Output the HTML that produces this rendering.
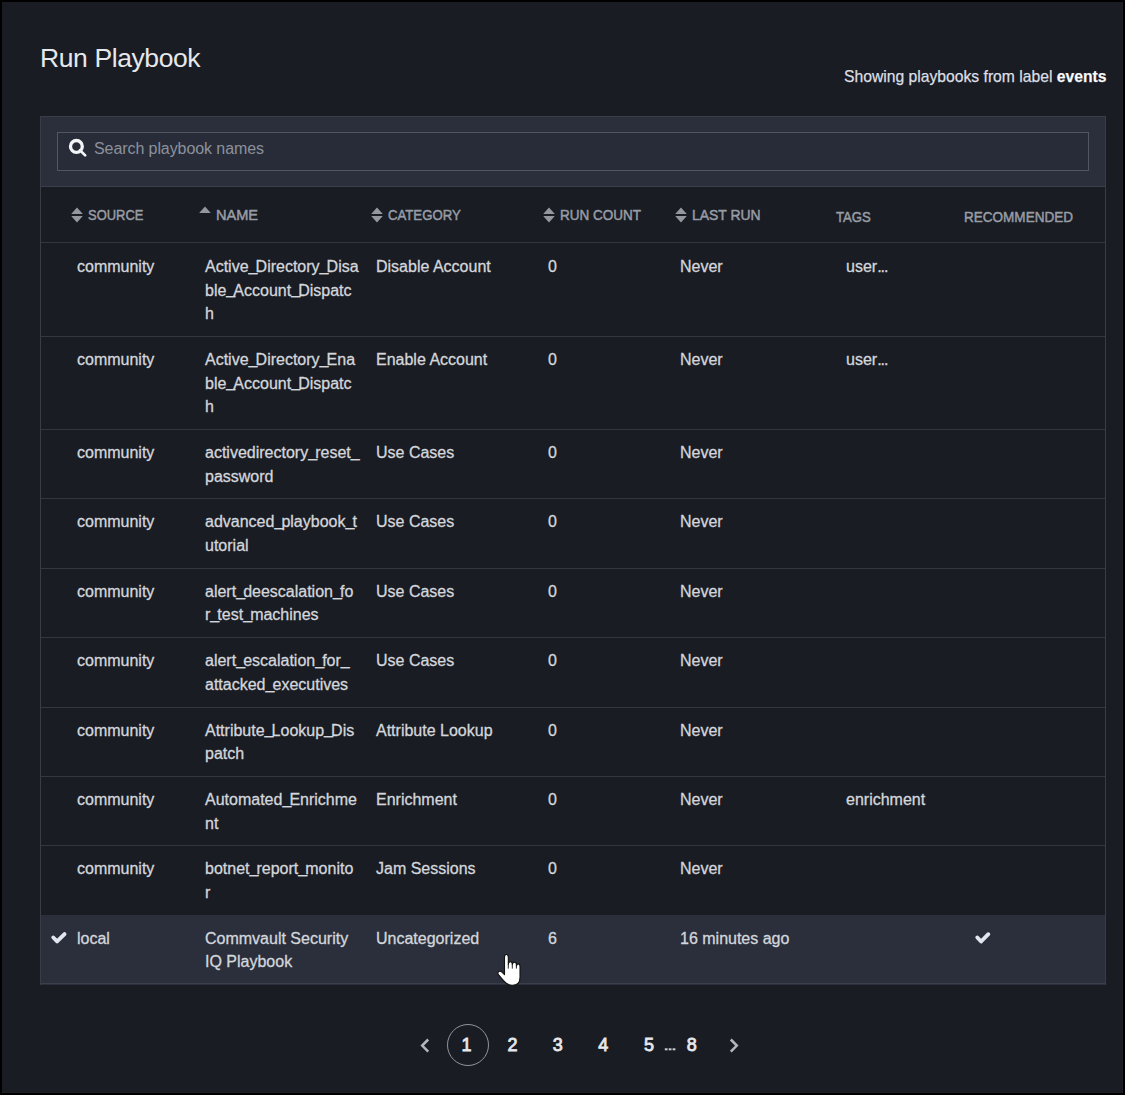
<!DOCTYPE html>
<html><head><meta charset="utf-8">
<style>
html,body{margin:0;padding:0;}
body{width:1125px;height:1095px;background:#000;position:relative;overflow:hidden;font-family:"Liberation Sans",sans-serif;color:#e6e8ec;}
.panel{position:absolute;left:2px;top:2px;width:1120px;height:1090px;background:#191c23;border-right:1px solid #1e2023;border-bottom:1px solid #1e2023;}
.abs{position:absolute;white-space:nowrap;}
.title{left:40px;top:42.6px;font-size:26.5px;letter-spacing:-0.4px;line-height:30px;color:#e6e8ec;}
.showing{left:844px;top:68px;font-size:15.7px;line-height:18px;color:#dcdfe4;-webkit-text-stroke:0.25px #dcdfe4;}
.showing b{color:#fff;}
.tblframe{position:absolute;left:40px;top:116px;width:1064px;height:867px;border:1px solid #393d46;background:#191c23;}
.searchbar{position:absolute;left:41px;top:117px;width:1064px;height:69px;background:#2a2f3b;border-bottom:1px solid #3a3f4b;}
.search{position:absolute;left:57px;top:132px;width:1030px;height:37px;border:1px solid #505664;background:#272c38;}
.ph{left:94px;top:140px;font-size:16px;letter-spacing:-0.08px;line-height:18px;color:#8c919c;}
.hline{position:absolute;left:41px;width:1064px;height:1px;background:#34383e;}
.hd{font-size:15px;line-height:16px;font-weight:normal;-webkit-text-stroke:0.5px #989ca5;color:#989ca5;transform-origin:0 0;}
.c{font-size:16px;line-height:23.625px;color:#d3d6db;-webkit-text-stroke:0.3px #d3d6db;}
.selrow{background:#2a2f3b;}
.pg{top:1034.5px;width:20px;text-align:center;font-size:18px;line-height:20px;font-weight:normal;color:#e6e8ec;-webkit-text-stroke:0.8px #e6e8ec;}
.dots{top:1036px;width:20px;text-align:center;font-size:13px;line-height:16px;font-weight:bold;color:#d6d9de;letter-spacing:-0.5px;}
.pgcircle{left:446.5px;top:1023.5px;width:42px;height:42px;box-sizing:border-box;border:1.3px solid #8f949c;border-radius:50%;}
.hline.last{background:#3a3f4b;}
.us{letter-spacing:-1.9px;position:relative;top:-1.2px;}
.ell{letter-spacing:-1px;}

</style></head>
<body>
<div class="panel"></div>
<div class="abs title">Run Playbook</div>
<div class="abs showing">Showing playbooks from label <b>events</b></div>
<div class="tblframe"></div>
<div class="searchbar"></div>
<div class="search"></div>
<svg class="abs" style="left:67px;top:138px" width="22" height="22" viewBox="0 0 22 22"><circle cx="9.4" cy="8.4" r="5.9" fill="none" stroke="#f2f4f7" stroke-width="3.3"/><line x1="13" y1="12.2" x2="18.2" y2="17.4" stroke="#f2f4f7" stroke-width="2.7" stroke-linecap="round"/></svg>
<div class="abs ph">Search playbook names</div>
<div class="hline" style="top:242px"></div>
<svg class="abs" style="left:71px;top:206.6px" width="12" height="16" viewBox="0 0 12 16"><path d="M6 0.6 L11.6 6.7 Q11.8 7 11.4 7 L0.6 7 Q0.2 7 0.4 6.7 Z M6 15.4 L11.6 9.3 Q11.8 9 11.4 9 L0.6 9 Q0.2 9 0.4 9.3 Z" fill="#93979f"/></svg>
<div class="abs hd" style="left:88.0px;top:207px;transform:scaleX(0.8625)">SOURCE</div>
<svg class="abs" style="left:199px;top:205.8px" width="12" height="8" viewBox="0 0 12 8"><path d="M6 0.6 L11.6 6.7 Q11.8 7 11.4 7 L0.6 7 Q0.2 7 0.4 6.7 Z" fill="#93979f"/></svg>
<div class="abs hd" style="left:216.0px;top:207px;transform:scaleX(0.971)">NAME</div>
<svg class="abs" style="left:371px;top:206.6px" width="12" height="16" viewBox="0 0 12 16"><path d="M6 0.6 L11.6 6.7 Q11.8 7 11.4 7 L0.6 7 Q0.2 7 0.4 6.7 Z M6 15.4 L11.6 9.3 Q11.8 9 11.4 9 L0.6 9 Q0.2 9 0.4 9.3 Z" fill="#93979f"/></svg>
<div class="abs hd" style="left:388.1px;top:207px;transform:scaleX(0.878)">CATEGORY</div>
<svg class="abs" style="left:543px;top:206.6px" width="12" height="16" viewBox="0 0 12 16"><path d="M6 0.6 L11.6 6.7 Q11.8 7 11.4 7 L0.6 7 Q0.2 7 0.4 6.7 Z M6 15.4 L11.6 9.3 Q11.8 9 11.4 9 L0.6 9 Q0.2 9 0.4 9.3 Z" fill="#93979f"/></svg>
<div class="abs hd" style="left:559.7px;top:207px;transform:scaleX(0.899)">RUN COUNT</div>
<svg class="abs" style="left:675px;top:206.6px" width="12" height="16" viewBox="0 0 12 16"><path d="M6 0.6 L11.6 6.7 Q11.8 7 11.4 7 L0.6 7 Q0.2 7 0.4 6.7 Z M6 15.4 L11.6 9.3 Q11.8 9 11.4 9 L0.6 9 Q0.2 9 0.4 9.3 Z" fill="#93979f"/></svg>
<div class="abs hd" style="left:691.9px;top:207px;transform:scaleX(0.928)">LAST RUN</div>
<div class="abs hd" style="left:836.4px;top:208.5px;transform:scaleX(0.875)">TAGS</div>
<div class="abs hd" style="left:964.3px;top:208.5px;transform:scaleX(0.902)">RECOMMENDED</div>
<div class="hline" style="top:336.000px"></div>
<div class="abs c" style="left:77px;top:255.062px">community</div>
<div class="abs c" style="left:205px;top:255.062px">Active<span class="us">_</span>Directory<span class="us">_</span>Disa<br>ble<span class="us">_</span>Account<span class="us">_</span>Dispatc<br>h</div>
<div class="abs c" style="left:376px;top:255.062px">Disable Account</div>
<div class="abs c" style="left:548px;top:255.062px">0</div>
<div class="abs c" style="left:680px;top:255.062px">Never</div>
<div class="abs c" style="left:846px;top:255.062px">user<span class="ell">...</span></div>
<div class="hline" style="top:429.000px"></div>
<div class="abs c" style="left:77px;top:348.062px">community</div>
<div class="abs c" style="left:205px;top:348.062px">Active<span class="us">_</span>Directory<span class="us">_</span>Ena<br>ble<span class="us">_</span>Account<span class="us">_</span>Dispatc<br>h</div>
<div class="abs c" style="left:376px;top:348.062px">Enable Account</div>
<div class="abs c" style="left:548px;top:348.062px">0</div>
<div class="abs c" style="left:680px;top:348.062px">Never</div>
<div class="abs c" style="left:846px;top:348.062px">user<span class="ell">...</span></div>
<div class="hline" style="top:498.375px"></div>
<div class="abs c" style="left:77px;top:441.062px">community</div>
<div class="abs c" style="left:205px;top:441.062px">activedirectory<span class="us">_</span>reset<span class="us">_</span><br>password</div>
<div class="abs c" style="left:376px;top:441.062px">Use Cases</div>
<div class="abs c" style="left:548px;top:441.062px">0</div>
<div class="abs c" style="left:680px;top:441.062px">Never</div>
<div class="hline" style="top:567.750px"></div>
<div class="abs c" style="left:77px;top:510.438px">community</div>
<div class="abs c" style="left:205px;top:510.438px">advanced<span class="us">_</span>playbook<span class="us">_</span>t<br>utorial</div>
<div class="abs c" style="left:376px;top:510.438px">Use Cases</div>
<div class="abs c" style="left:548px;top:510.438px">0</div>
<div class="abs c" style="left:680px;top:510.438px">Never</div>
<div class="hline" style="top:637.125px"></div>
<div class="abs c" style="left:77px;top:579.812px">community</div>
<div class="abs c" style="left:205px;top:579.812px">alert<span class="us">_</span>deescalation<span class="us">_</span>fo<br>r<span class="us">_</span>test<span class="us">_</span>machines</div>
<div class="abs c" style="left:376px;top:579.812px">Use Cases</div>
<div class="abs c" style="left:548px;top:579.812px">0</div>
<div class="abs c" style="left:680px;top:579.812px">Never</div>
<div class="hline" style="top:706.500px"></div>
<div class="abs c" style="left:77px;top:649.188px">community</div>
<div class="abs c" style="left:205px;top:649.188px">alert<span class="us">_</span>escalation<span class="us">_</span>for<span class="us">_</span><br>attacked<span class="us">_</span>executives</div>
<div class="abs c" style="left:376px;top:649.188px">Use Cases</div>
<div class="abs c" style="left:548px;top:649.188px">0</div>
<div class="abs c" style="left:680px;top:649.188px">Never</div>
<div class="hline" style="top:775.875px"></div>
<div class="abs c" style="left:77px;top:718.562px">community</div>
<div class="abs c" style="left:205px;top:718.562px">Attribute<span class="us">_</span>Lookup<span class="us">_</span>Dis<br>patch</div>
<div class="abs c" style="left:376px;top:718.562px">Attribute Lookup</div>
<div class="abs c" style="left:548px;top:718.562px">0</div>
<div class="abs c" style="left:680px;top:718.562px">Never</div>
<div class="hline" style="top:845.250px"></div>
<div class="abs c" style="left:77px;top:787.938px">community</div>
<div class="abs c" style="left:205px;top:787.938px">Automated<span class="us">_</span>Enrichme<br>nt</div>
<div class="abs c" style="left:376px;top:787.938px">Enrichment</div>
<div class="abs c" style="left:548px;top:787.938px">0</div>
<div class="abs c" style="left:680px;top:787.938px">Never</div>
<div class="abs c" style="left:846px;top:787.938px">enrichment</div>
<div class="hline" style="top:914.625px"></div>
<div class="abs c" style="left:77px;top:857.312px">community</div>
<div class="abs c" style="left:205px;top:857.312px">botnet<span class="us">_</span>report<span class="us">_</span>monito<br>r</div>
<div class="abs c" style="left:376px;top:857.312px">Jam Sessions</div>
<div class="abs c" style="left:548px;top:857.312px">0</div>
<div class="abs c" style="left:680px;top:857.312px">Never</div>
<div class="abs selrow" style="left:41px;top:915.125px;width:1064px;height:69.375px"></div>
<div class="hline last" style="top:983.000px"></div>
<div class="abs c" style="left:77px;top:926.688px">local</div>
<div class="abs c" style="left:205px;top:926.688px">Commvault Security<br>IQ Playbook</div>
<div class="abs c" style="left:376px;top:926.688px">Uncategorized</div>
<div class="abs c" style="left:548px;top:926.688px">6</div>
<div class="abs c" style="left:680px;top:926.688px">16 minutes ago</div>
<svg class="abs" style="left:45px;top:925px" width="30" height="25" viewBox="45 925 30 25"><path d="M53.3 937.5 L57.1 941.4 L64.5 934.1" fill="none" stroke="#e2e6ee" stroke-width="3.9" stroke-linecap="round" stroke-linejoin="round"/></svg>
<svg class="abs" style="left:968px;top:925px" width="30" height="25" viewBox="968 925 30 25"><path d="M977.3 937.5 L981.1 941.5 L988.3 934.2" fill="none" stroke="#e2e6ee" stroke-width="3.9" stroke-linecap="round" stroke-linejoin="round"/></svg>
<svg class="abs" style="left:418px;top:1036px" width="14" height="18" viewBox="0 0 14 18"><path d="M10.2 3.5 L4.2 9.6 L10.2 15.7" fill="none" stroke="#b3b7bf" stroke-width="2.5"/></svg>
<div class="abs pgcircle"></div>
<div class="abs pg" style="left:456.6px">1</div>
<div class="abs pg" style="left:502.5px">2</div>
<div class="abs pg" style="left:547.8px">3</div>
<div class="abs pg" style="left:593.2px">4</div>
<div class="abs pg" style="left:639.1px">5</div>
<div class="abs pg" style="left:681.7px">8</div>
<svg class="abs" style="left:664px;top:1047px" width="14" height="5" viewBox="0 0 14 5"><rect x="0.8" y="1.3" width="2.8" height="2" fill="#c9ccd2"/><rect x="4.7" y="1.3" width="2.8" height="2" fill="#c9ccd2"/><rect x="8.6" y="1.3" width="2.8" height="2" fill="#c9ccd2"/></svg>
<svg class="abs" style="left:727px;top:1036px" width="14" height="18" viewBox="0 0 14 18"><path d="M3.8 3.5 L9.8 9.6 L3.8 15.7" fill="none" stroke="#b3b7bf" stroke-width="2.5"/></svg>
<svg class="abs" style="left:490px;top:948px" width="36" height="42" viewBox="490 948 36 42"><path d="M504.5 957.2 Q504.5 954.5 506.4 954.5 Q508.3 954.5 508.3 957.2 L508.3 964.2 Q508.5 961.7 510.4 961.7 Q512.3 961.7 512.3 964.2 L512.3 964.8 Q512.6 962.3 514.5 962.3 Q516.4 962.3 516.4 964.8 L516.4 966.2 Q516.7 963.9 518.3 963.9 Q520 963.9 520 966.6 L520 977.5 Q520 985.2 512.4 985.2 Q507 985.2 503.5 980.6 L498.4 974.6 Q497.2 972.8 498.8 971.6 Q500.4 970.7 502.2 972.3 L504.5 974.6 Z" fill="#fff" stroke="#111" stroke-width="1.1" stroke-linejoin="round"/><path d="M508.3 964 L508.3 968.6 M512.3 964.5 L512.3 968.6 M516.4 966 L516.4 968.6" stroke="#111" stroke-width="0.9"/></svg>
</body></html>
